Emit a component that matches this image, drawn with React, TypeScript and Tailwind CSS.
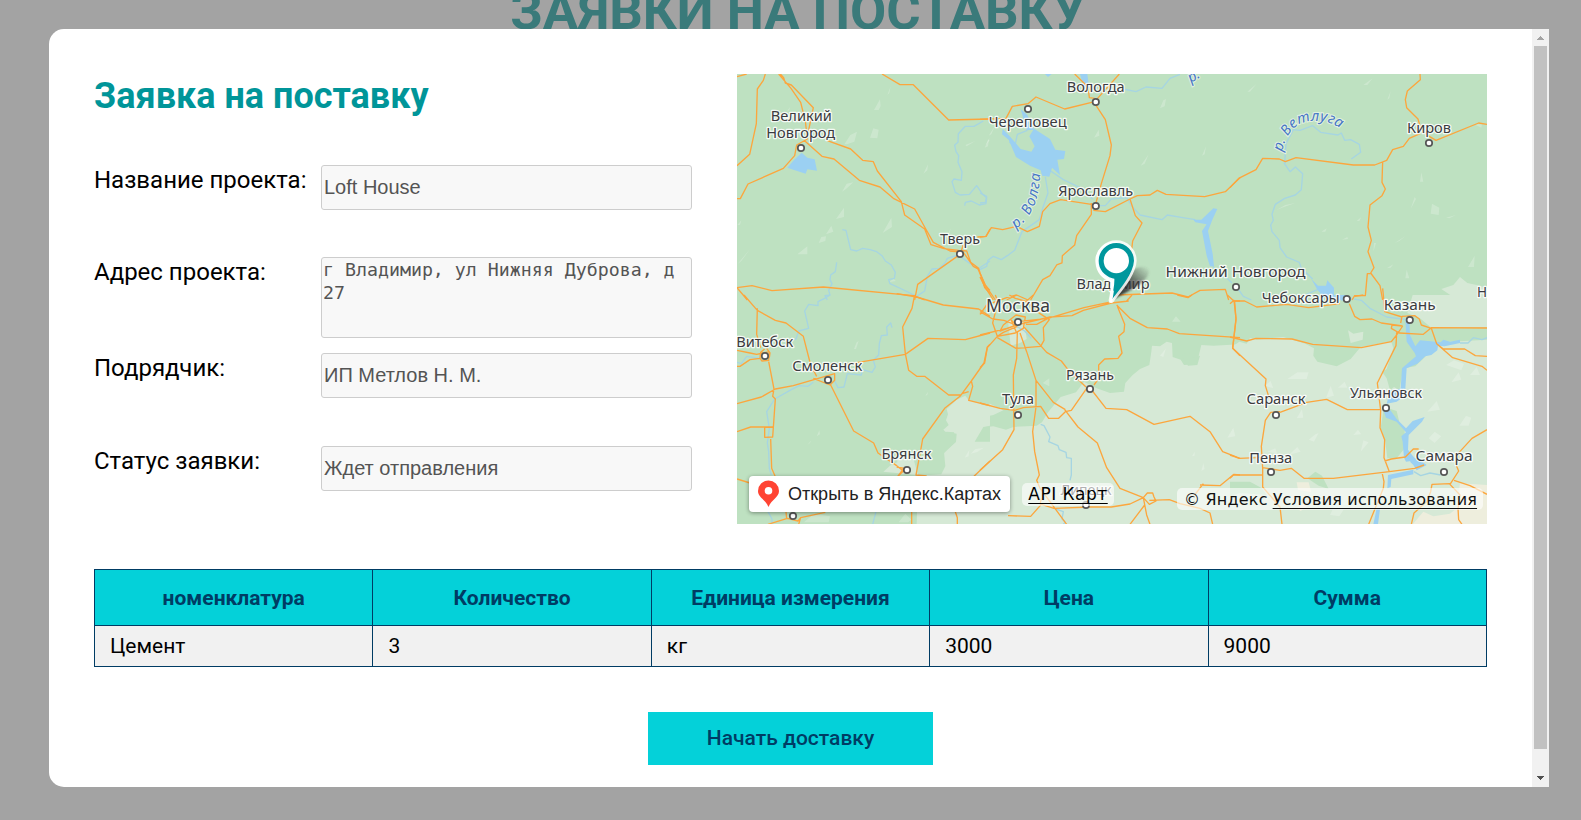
import React from "react";

type Tile = {
  x: number;
  y: number;
  light?: string[];
  forest?: string[];
  sand?: string[];
  shade?: string[];
  water?: string[];
  rivers?: string[];
  roads: string[];
};

/* Map geometry is stored in tiles at three units per pixel. */
const tiles: Tile[] = [
  {
    x: -7,
    y: -9,
    shade: [
      "M343 238l18-28 20-10-8 30-22 8z",
      "M420 218l10-28 16 4-4 26z",
      "M432 135l18-32 2 20-6 12z",
      "M336 380l14-24 20-4-22 20z",
      "M318 462l24-34 0 28z",
      "M458 504l26-46 2 28z",
      "M288 508l16-26 6 18z",
      "M266 534l8-18 14-2-2 14z",
      "M202 568l30-24 0 24z",
      "M580 326l14-28-2 18z",
      "M22 598l40-48-28 38z",
      "M22 480l12-14-4 14z",
      "M170 140l10-14-2 10z",
      "M472 90l10-26-4 20z",
      "M648 520l14-30-6 30z",
      "M706 240l30-12-26 16z",
      "M766 242l8-18 6 0z",
      "M476 652l14-10 8 6z",
    ],
    water: ["M172 308L192 285 215 263 232 278 254 283 261 317 232 313 227 326 190 314Z"],
    rivers: [
      "M760 168L732 184 706 184 685 206 684 232 674 240 678 260 686 272 684 292 696 320 694 346 672 342 666 350 676 382 690 390 718 388 740 362 758 388 770 398 768 416 748 420 724 408 706 412 704 422",
      "M337 494L348 496 362 554 380 558 398 550 420 554 440 560 456 572 466 588 484 600 496 622 493 640 476 644 480 656 515 672 560 694 584 678 592 634 606 612 628 610 645 594 652 580 684 570 712 590 744 612 762 600 780 588",
      "M320 592L316 620 302 630 300 644 306 656 296 676 300 690 285 692 292 705",
    ],
    roads: [
      "M21 35L50 27",
      "M106 27L100 46 82 72 79 176 59 268 21 302",
      "M146 27L183 70 212 112 226 168 232 222 200 240 194 272 160 310 54 357 31 401 21 401",
      "M151 27L161 38 166 54 184 60 250 128 235 200",
      "M222 226L276 274 312 282 388 346 450 366 490 400 554 432 584 486 610 532 660 558 700 562 730 604 744 612 765 660 780 676",
      "M290 226L362 252 398 286 430 290 442 318 514 410 524 450 584 492 603 539 642 551 686 556 710 558 722 592 746 610 764 668 780 686",
      "M456 27L510 59 550 59 656 165 780 162",
      "M700 540L690 568 563 658 554 705",
      "M780 492L768 514 742 516",
      "M21 668L66 662 126 677 280 666 550 692 584 705",
      "M21 668L52 705",
    ],
  },
  {
    x: 243,
    y: -9,
    shade: [
      "M540 130l10-24 8-4-4 22z",
      "M342 218l14-24 2 18z",
      "M482 302l24-34-12 28z",
      "M666 272l12-28-4 24z",
      "M14 248l14-30-4 26z",
      "M26 212l18-28-10 24z",
    ],
    water: [
      "M122 132L142 150 160 190 210 222 226 254 256 258 252 282 232 284 240 330 216 308 208 335 186 332 182 316 150 302 108 276 86 224 66 208 68 192 88 212 122 252 154 260 164 244 148 214 160 194 140 196Z",
      "M300 27L322 27 328 74 310 62Z",
      "M195 27L215 27 204 36Z",
      "M640 464L664 464 700 430 712 432 698 462 684 498 698 566 702 604 690 604 680 572 666 498 680 478 646 472Z",
    ],
    rivers: [
      "M88 230L104 246 112 208 142 196",
      "M430 72L468 80 498 66 546 70 570 40 600 28",
      "M206 314L250 344 300 368 338 402",
      "M196 336L204 384 188 430 178 464 126 500 104 556 82 572 64 584 40 574 24 586 20 604 0 614",
      "M350 422L376 422 394 402 440 398 456 424 480 450 546 464 562 450 608 458 646 464",
      "M0 384L20 394 16 412 0 414",
      "M698 600L712 630 740 638 756 654",
    ],
    roads: [
      "M0 163L78 160 97 124 144 116 168 96 254 132 344 110 418 27",
      "M284 27L324 66 328 98 344 100",
      "M346 118L376 164 394 240 390 272 364 356 346 420",
      "M346 420L334 418 242 404 210 416 188 440 178 484 142 500 110 484 68 494 34 488 18 514 0 516",
      "M334 414L334 448 290 512 284 540 247 572 246 594 230 600 210 632 188 644 152 705",
      "M340 436L376 440 450 402 472 392 510 390 532 376 558 388 674 395 736 380 780 338",
      "M450 402L466 452 486 474 458 528 452 580",
      "M0 624L16 660 46 705",
      "M0 636L14 664 40 705",
      "M390 705L410 690 576 684 624 696 660 676 736 673 746 705",
      "M110 690L80 705M110 690L144 705",
    ],
  },
  {
    x: 493,
    y: -9,
    light: [
      "M634 672L670 660 690 636 712 654 740 660 771 668 771 705 690 705 664 692Z",
    ],
    shade: [
      "M602 446l4-30 22 12-2 22z",
      "M542 432l12-36 4 6z",
      "M138 436l28-16 30-6-40 14z",
      "M494 534l34-22-20 16z",
      "M274 500l16-10-4 10z",
      "M336 524l16-8 2 6z",
      "M570 350l4-28 6 28z",
      "M648 458l30-8-20 10z",
      "M472 104l10-26-4 22z",
      "M400 60l28-20-16 20z",
      "M732 178l24 0-2 10z",
      "M52 80l28-24-20 24z",
      "M526 640l4-26 8 26z",
      "M714 606l20-34-2 34z",
      "M380 468l14-12-6 12z",
      "M470 610l20-12-8 10z",
      "M430 560l2-26 6 0z",
    ],
    water: ["M244 642L264 662 288 662 292 646 312 668 312 690 334 705 284 700 262 674Z"],
    rivers: [
      "M164 296L168 236 190 194 210 196 248 182 272 202 324 210 334 204 344 226 362 224 388 238 392 262 364 282",
      "M162 294L180 320 196 306 218 326 214 374 196 390 164 400 136 418 126 448 130 466 122 480 126 500 148 526 150 548 170 576 208 592 214 610 248 642",
      "M228 689L262 674",
      "M20 666L40 694 64 705",
    ],
    roads: [
      "M0 368L26 340 78 314 98 280 148 282 166 290 198 278 370 300 434 300 470 286 488 254 520 244 538 220 570 206",
      "M570 27L571 44 532 78 526 104 530 128 564 162 572 190 594 212 618 226 746 174 771 178",
      "M458 290L456 352 466 372 456 392 420 420 414 486 424 526 414 560 432 608 422 624 450 662 458 705",
      "M422 626L412 626 406 692 374 692 366 705",
    ],
  },
  {
    x: -7,
    y: 221,
    light: [
      "M780 336L716 316 706 302 690 310 680 314 650 342 654 358 648 376 656 390 640 404 646 410 680 416 678 440 642 470 646 514 634 538 600 540 560 540 460 530 480 512 502 502 500 470 550 490 564 540 560 690 780 690Z",
    ],
    forest: ["M650 410L672 412 678 440 640 476 616 476 632 440Z", "M734 440L780 440 780 392 760 396Z"],
    shade: [
      "M586 302l8-12-2 10z",
      "M232 450l12-14-4 8z",
      "M372 162l8-20 6-4-8 24z",
      "M260 424l8-18 2 12z",
      "M704 488l14-24-2 20z",
      "M222 682l30-26 48 8-4 18z",
      "M506 682l20-26 18 18-10 8z",
      "M722 476l14-14 26-4-22 14z",
    ],
    rivers: [
      "M300 0L284 10 264 20 264 32 236 28 224 48 236 100 206 108 198 132 170 138 164 160",
      "M486 98L482 84 470 96 472 120 454 122 448 146 446 180 430 196 436 216 426 232 398 224 394 240 352 236 342 276 324 278 314 258",
      "M250 262L234 274 208 272 184 284 134 312 110 350 118 400 112 444 116 470 118 520 124 540",
      "M21 202L34 206 50 184 90 190",
      "M114 650L126 672 126 688",
      "M438 650L428 688",
    ],
    roads: [
      "M42 0L82 46 136 76 168 84 220 124 242 210 260 244",
      "M82 40L80 118 92 158",
      "M21 166L60 174 80 178 118 170 116 196 96 198 90 190 60 194 30 214 21 214",
      "M116 200L132 282 128 304 136 312 128 426 104 427 104 397 128 396 62 396 21 410",
      "M21 326L94 306 136 282 190 272 314 236 314 256 300 270 250 250",
      "M104 162L92 172 90 190M110 160L120 174 118 188",
      "M122 432L125 520 136 545M21 552L60 564",
      "M302 270L371 408 431 444 444 474 500 512 520 528 502 546",
      "M350 208L526 178 594 130 706 134 780 114",
      "M554 0L546 40 518 96 526 176 536 226 560 244 584 244 656 300 694 300",
      "M500 -4L560 6 640 30 746 42 780 64",
      "M780 148L772 156 762 204 724 258 690 304 644 340 578 432 572 466 558 540 590 543",
      "M724 258L728 274 716 316 780 332M716 290L696 296",
      "M780 498L732 544M545 650L545 688M676 650L682 668 682 688",
      "M114 688L172 670 204 678 212 668 286 652M206 688L212 668M168 650L170 672",
      "M500 516L524 520M530 536L520 522 502 546",
    ],
  },
  {
    x: 243,
    y: 221,
    light: [
      "M0 398L40 394 78 404 100 396 170 392 186 382 204 352 242 306 288 292 312 260 350 280 390 294 432 290 436 264 458 240 480 222 508 210 514 170 516 152 540 154 560 140 576 144 578 186 602 194 612 210 650 208 664 150 700 152 780 148 780 690 0 690Z",
      "M84 76L134 82 140 132 120 144 92 152Z",
      "M0 338L30 326 70 346 40 360 0 368Z",
    ],
    forest: ["M606 182l18-12 16 18 20-6-8 28-28 2z"],
    shade: [
      "M742 428l18-30 6 26z",
      "M540 182l18-22-8 26z",
      "M636 484l8-14 0 12z",
      "M576 80l26 0-14-16z",
      "M188 264l20-14 0 24z",
      "M664 528l6-24 4 18z",
      "M752 492l22-10-4 8z",
    ],
    rivers: [
      "M182 388L192 392 210 426 206 440 234 452 238 464 258 472 260 488 274 490 274 540 270 556",
      "M222 640L250 650 246 672 256 682 250 688",
      "M110 94L134 108 154 130",
    ],
    roads: [
      "M0 50L38 72 72 76 108 90 210 66 276 62 310 46 394 24 446 18",
      "M112 80L204 70 312 38 386 22M138 88L170 88 208 68",
      "M46 0L54 20 38 84 52 124 106 114 130 100 136 66 108 60 70 90 60 108 110 90 94 76 110 114",
      "M0 120L90 98M0 218L14 204 22 158 52 124 70 112 112 94",
      "M52 128L108 160 182 154 192 136 190 98 208 74 180 56 140 20 106 10 88 0",
      "M0 58L20 30 80 8 110 0M136 22L160 0",
      "M112 112L110 190 100 240 102 404 68 464 0 526",
      "M120 114L140 170 168 256 220 322 256 344",
      "M132 96L200 172 244 198 264 224 318 276",
      "M168 256L168 336 158 410 164 470 178 540 170 556 180 580 210 620 260 688",
      "M336 288L320 280 274 346 256 350 236 370 206 370 182 334 130 338 104 346 60 340 0 324",
      "M254 344L294 396 352 444 380 518 420 580 490 608 502 594 518 594 522 606 528 618 508 628 490 608 450 627 394 636 330 636 222 640 184 628 152 664 84 662",
      "M490 608L500 660 510 688M494 630L450 688M508 616L568 614 600 626 660 640 690 654 698 688",
      "M328 276L378 340 440 344 522 388 630 364 690 410 728 470 780 490",
      "M410 30L450 70 502 98 562 102 598 116 780 128",
      "M412 34L434 88 432 110 416 124 426 174 414 190 374 192 356 210 356 250 342 270",
      "M440 18L456 0M592 0L624 8 636 0",
      "M742 0L764 20 768 74 758 160 780 182M764 18L780 18",
      "M660 570L720 572 762 538 780 540M644 600L670 566",
      "M180 628L184 610",
    ],
  },
  {
    x: 493,
    y: 221,
    light: ["M0 160L28 140 50 146 60 128 80 134 160 126 226 146 252 160 250 182 262 200 320 214 362 192 392 156 458 144 484 140 490 160 470 222 456 230 470 250 480 286 492 276 508 286 520 220 556 214 620 152 660 140 771 134 771 690 0 690Z", "M548 0L771 0 771 96 604 98 570 70 532 54Z", "M354 106l16 10 30-6-2 24-36 10z"],
    forest: [
      "M530 90L600 100 620 145 580 138 556 152 540 128Z",
      "M462 336L500 348 510 390 524 400 524 460 500 490 472 490 466 440 452 398Z",
      "M232 550l24-20 20 12 20 40-30-10z",
      "M0 560l60 0 36 20 14 20-80-6-30 10z",
    ],
    sand: [
      "M690 565L771 570 771 688 548 688 580 650 610 664 660 656 680 640Z",
      "M200 562l36 0 8 30-40-8z",
      "M200 640l20-14 10 10-18 12z",
    ],
    shade: [
      "M172 252l30-20 34 0-6 20z",
      "M104 272l18-14 8 22z",
      "M104 330l20-26 14 20z",
      "M200 370l16-28 4 26z",
      "M236 434l20-16 10-4-14 26z",
      "M392 470l8-34 16 6z",
      "M288 308l14-36 10 30z",
      "M324 278l20-18 8 18z",
      "M176 480l26-24 10 14z",
      "M688 392l20-30 16 6-8 24z",
      "M592 350l28-32 10 26z",
      "M664 262l22-30 8 22z",
      "M648 210l24-14 30 10-8 20z",
      "M440 600l20-12 10 20z",
      "M112 470l24-10 6 16z",
      "M596 430l18-20 20 14-20 20z",
      "M720 240l20-24 10 24z",
      "M300 660l14-30 30 10-16 24z",
      "M370 420l14-16 10 14z",
    ],
    water: [
      "M526 74L538 76 540 120 556 154 570 136 632 142 640 134 660 140 690 134 690 144 644 154 624 152 622 166 604 180 586 184 562 206 530 220 528 250 526 282 512 280 516 220 530 208 558 184 554 174 530 140Z",
      "M458 340L480 344 500 372 528 400 548 378 584 366 576 380 536 420 534 464 546 480 560 496 528 500 522 488 518 440 514 424 528 412 500 380 468 368Z",
      "M470 326L480 286 520 280 520 306 500 320Z",
      "M540 500L560 488 590 510 560 526 550 510Z",
      "M474 540L550 524 550 538 484 552 482 576 472 580Z",
      "M440 640L450 642 444 688 430 688Z",
      "M310 0L350 0 354 4 336 18 318 4Z",
    ],
    rivers: [
      "M552 530L572 542 600 534 632 540",
      "M690 144L714 144 730 128 756 134 771 128",
      "M362 10L394 16 420 40 470 66 530 74",
    ],
    roads: [
      "M0 26L12 16 18 70 8 160 108 252 106 272 118 310",
      "M0 126L50 138 78 130 186 132 248 148 394 158 484 140 500 120 518 93",
      "M10 18L44 18 80 36 170 28 236 38 330 26",
      "M358 26L374 64 390 74 426 72 454 84 518 93",
      "M518 93L486 90 484 100 508 114 580 118 604 98 771 99",
      "M512 84L516 64 554 62 568 72 574 90 604 100 620 146 668 188 756 214 771 226",
      "M458 -20L460 0 464 50 516 66M374 4L400 0",
      "M620 146L640 162 704 162 736 182 771 184",
      "M500 112L498 152 442 264 452 346 450 398 464 434 462 488 478 530",
      "M150 352L230 322 290 313 352 344 452 344",
      "M150 350L122 352 106 376 94 454 98 520 98 576 150 636 156 688",
      "M0 480L28 490 80 488 96 486M0 550L10 540 100 540",
      "M98 518L150 526 184 520 222 550 310 550 478 530 554 520 582 510",
      "M464 498L484 492 526 486 550 462 566 462M456 532L462 560 460 580 416 688",
      "M771 404L726 430 684 476 680 514 686 528 660 568 690 600 684 640 686 674 696 688",
      "M672 556L720 572 771 598M660 566L606 568 602 590 590 620 552 654 544 688",
    ],
  },
];

type City = { t: string; x: number; y: number; w: number; s?: number; dot?: [number, number] };

const cities: City[] = [
  { t: "Великий", x: 64.3, y: 48, w: 61 },
  { t: "Новгород", x: 63.7, y: 65, w: 69, dot: [64, 74] },
  { t: "Тверь", x: 223, y: 171, w: 40, dot: [223, 180] },
  { t: "Вологда", x: 358.7, y: 19, w: 58, dot: [358.8, 28] },
  { t: "Череповец", x: 290.7, y: 53.5, w: 78, dot: [291, 35] },
  { t: "Ярославль", x: 358.7, y: 122.5, w: 75, dot: [358.8, 132] },
  { t: "Владимир", x: 376, y: 216, w: 73 },
  { t: "Нижний Новгород", x: 498.6, y: 203.5, w: 140, dot: [499, 213] },
  { t: "Киров", x: 692, y: 59.5, w: 44, dot: [692, 69] },
  { t: "Чебоксары", x: 563.7, y: 229.5, w: 78, dot: [609.8, 225] },
  { t: "Н", x: 745, y: 223.5, w: 10 },
  { t: "Казань", x: 672.7, y: 237, w: 52, dot: [672.8, 246] },
  { t: "Саранск", x: 539, y: 331, w: 59, dot: [539, 341] },
  { t: "Ульяновск", x: 649, y: 325, w: 72, dot: [649, 334] },
  { t: "Пенза", x: 533.7, y: 389.5, w: 43, dot: [534, 398] },
  { t: "Самара", x: 707, y: 388, w: 57, dot: [707, 398] },
  { t: "Витебск", x: 27.7, y: 274, w: 57, dot: [28, 282] },
  { t: "Смоленск", x: 90.2, y: 297.5, w: 70, dot: [91, 306] },
  { t: "Брянск", x: 169.4, y: 385.5, w: 50, dot: [170, 396] },
  { t: "Москва", x: 281, y: 239, w: 64, s: 17.5, dot: [281, 248] },
  { t: "Рязань", x: 353, y: 307, w: 48, dot: [353, 315] },
  { t: "Тула", x: 281, y: 331, w: 32, dot: [281, 341] },
  { t: "Липецк", x: 349, y: 421.5, w: 51, dot: [349, 431] },
  { t: "", x: 0, y: 0, w: 0, dot: [56, 442] },
];

function MapCanvas() {
  const layer = (key: keyof Tile, props: React.SVGProps<SVGPathElement>) =>
    tiles.map((t, i) => (
      <g key={i} transform={`translate(${t.x} ${t.y}) scale(.33333)`}>
        <path d={((t[key] as string[] | undefined) ?? []).join("")} {...props} />
      </g>
    ));
  return (
    <svg width="750" height="450" viewBox="0 0 750 450" className="block">
      <defs>
        <linearGradient id="pinShadow" x1="0" y1="1" x2="1" y2="0">
          <stop offset="0" stopColor="#222" stopOpacity="1" />
          <stop offset="0.55" stopColor="#333" stopOpacity="0.7" />
          <stop offset="1" stopColor="#555" stopOpacity="0" />
        </linearGradient>
        <filter id="soft">
          <feGaussianBlur stdDeviation="3" />
        </filter>
        <path id="volga" d="M279 155C294 144 303 126 303 97" />
        <path id="vetluga" d="M545 78C549 60 558 48 574 47S596 49 614 61" />
      </defs>
      <rect width="750" height="450" fill="#bee1c1" />
      {layer("light", { fill: "#d6e9d6" })}
      {layer("forest", { fill: "#bee1c1" })}
      {layer("sand", { fill: "#eeeedd" })}
      {layer("shade", { fill: "#fff", fillOpacity: 0.22 })}
      {layer("rivers", { fill: "none", stroke: "#a6d5e2", strokeWidth: 4, strokeLinejoin: "round" })}
      {layer("water", { fill: "#9bd0f2" })}
      {layer("roads", { fill: "none", stroke: "#fca63d", strokeWidth: 4, strokeLinejoin: "round" })}
      {cities.map(
        (c, i) =>
          c.dot && <circle key={i} cx={c.dot[0]} cy={c.dot[1]} r="3.2" fill="#fff" stroke="#575757" strokeWidth="1.7" />,
      )}
      <g
        className="font-['Noto_Sans']"
        textAnchor="middle"
        fill="#3b3b40"
        stroke="#fff"
        strokeOpacity="0.85"
        strokeWidth="2.6"
        strokeLinejoin="round"
        paintOrder="stroke"
      >
        {cities.map((c) =>
          c.t ? (
            <text key={c.t} x={c.x} y={c.y - 0.8} fontSize={c.s ?? 15} textLength={c.w} lengthAdjust="spacingAndGlyphs">
              {c.t}
            </text>
          ) : null,
        )}
      </g>
      <g
        className="font-['Noto_Sans'] italic"
        fontSize="14.5"
        fill="#4676c5"
        stroke="#e2f1e2"
        strokeWidth="2"
        paintOrder="stroke"
      >
        <text textLength="63">
          <textPath href="#volga">р. Волга</textPath>
        </text>
        <text textLength="77">
          <textPath href="#vetluga">р. Ветлуга</textPath>
        </text>
        <text transform="translate(454 9) rotate(-32)">р.</text>
      </g>
      <g transform="translate(343 156) scale(.33333)">
        <path d="M98 208L130 150C150 112 194 102 206 120 214 146 158 180 98 208Z" fill="url(#pinShadow)" filter="url(#soft)" />
        <path
          d="M109 39A53 53 0 0 0 50 98C52 126 68 144 96 154L93 210 101 200 109 39Z"
          fill="#d2e9ff"
          stroke="#ffffff"
          strokeWidth="7"
        />
        <path
          d="M109 39A53 53 0 0 0 56 92C56 118 72 136 97 145L103 146C104 165 99 185 94 211C125 170 160 130 162 92A53 53 0 0 0 109 39Z"
          fill="#00979d"
          stroke="#fff"
          strokeOpacity="0.85"
          strokeWidth="16"
          strokeLinejoin="round"
          paintOrder="stroke"
        />
        <circle cx="109" cy="92" r="38" fill="#fff" />
        <path d="M93 214L98 184" stroke="#fff" strokeWidth="7" strokeLinecap="round" />
      </g>
    </svg>
  );
}

const fieldBox =
  "box-border w-[371px] resize-none rounded-[3px] border border-[#cdcdcd] bg-[#f8f8f8] text-[#545454] outline-none";

function Field({ label, children, className }: { label: string; children: React.ReactNode; className: string }) {
  return (
    <div className={`flex items-start ${className}`}>
      <div className="w-[227px] whitespace-nowrap pt-px text-[24px] leading-[28px] text-black">{label}</div>
      {children}
    </div>
  );
}

const columns = ["номенклатура", "Количество", "Единица измерения", "Цена", "Сумма"];
const row = ["Цемент", "3", "кг", "3000", "9000"];

export default function App() {
  return (
    <div className="relative h-[820px] w-[1581px] overflow-hidden bg-[#a3a3a3] font-[Roboto,sans-serif]">
      <h1 className="-mt-[25px] pl-[15px] text-center text-[52.6px] leading-[72px] font-bold text-[#3a7a7a]">ЗАЯВКИ НА ПОСТАВКУ</h1>

      <div className="absolute top-[29px] left-[49px] flex h-[758px] w-[1500px] overflow-hidden rounded-l-[15px] bg-white">
        <div className="w-[1483px] px-[45px] pt-[45px]">
          <div className="flex h-[450px] justify-between">
            <div className="w-[598px]">
              <h2 className="text-[36px] leading-[44px] font-bold text-[#009599]">Заявка на поставку</h2>
              <Field label="Название проекта:" className="mt-[47px] h-[92px]">
                <input readOnly value="Loft House" className={`${fieldBox} h-[45px] px-[2px] font-['Liberation_Sans'] text-[20px]`} />
              </Field>
              <Field label="Адрес проекта:" className="h-[96px]">
                <textarea
                  readOnly
                  value="г Владимир, ул Нижняя Дуброва, д 27"
                  className={`${fieldBox} h-[81px] overflow-hidden px-px pt-0 font-['DejaVu_Sans_Mono'] text-[18.25px] leading-[23px]`}
                />
              </Field>
              <Field label="Подрядчик:" className="h-[93px]">
                <input readOnly value="ИП Метлов Н. М." className={`${fieldBox} h-[45px] px-[2px] font-['Liberation_Sans'] text-[20px]`} />
              </Field>
              <Field label="Статус заявки:" className="h-[45px]">
                <input readOnly value="Ждет отправления" className={`${fieldBox} h-[45px] px-[2px] font-['Liberation_Sans'] text-[20px]`} />
              </Field>
            </div>

            <div className="relative h-[450px] w-[750px] overflow-hidden">
              <MapCanvas />
              <div className="absolute top-[402px] left-[12px] flex h-[36px] w-[261px] items-center rounded-[4px] bg-white pl-[8px] shadow-[0_1px_4px_rgba(0,0,0,0.4)]">
                <svg width="23" height="28" viewBox="0 0 23 28" className="shrink-0">
                  <path
                    d="M11.5 0.500A10.500 10.500 0 0 0 1 11C1 17.500 8.200 19 11.500 27 14.800 19 22 17.500 22 11A10.500 10.500 0 0 0 11.500 0.500Z"
                    fill="#ff4433"
                  />
                  <circle cx="11.5" cy="10.8" r="3.8" fill="#fff" />
                </svg>
                <span className="ml-[8px] whitespace-nowrap font-['Liberation_Sans'] text-[18px] text-[#222]">Открыть в Яндекс.Картах</span>
              </div>
              <div className="absolute top-[409px] left-[285px] flex h-[23px] w-[92px] items-center justify-center rounded-[5px] bg-white/60 pt-px font-['DejaVu_Sans'] text-[17px] tracking-[0.5px] whitespace-nowrap text-black">
                <span className="underline underline-offset-[3px]">API Карт</span>
              </div>
              <div className="absolute top-[414px] left-[440px] flex h-[22px] w-[306px] items-center gap-[5px] rounded-[5px] bg-white/60 pt-[2px] pl-[7px] font-['DejaVu_Sans'] text-[16px] tracking-[0.2px] whitespace-nowrap text-[#111]">
                <span>© Яндекс</span>
                <span className="underline underline-offset-[3px]">Условия использования</span>
              </div>
            </div>
          </div>

          <table className="mt-[45px] w-[1393px] table-fixed border-collapse">
            <thead>
              <tr className="h-[56px] bg-[#04d1d9]">
                {columns.map((c) => (
                  <th key={c} className="border border-[#003c64] pt-[2px] text-[21px] font-bold text-[#003c64]">
                    {c}
                  </th>
                ))}
              </tr>
            </thead>
            <tbody>
              <tr className="h-[41px] bg-[#f1f1f1]">
                {row.map((c) => (
                  <td key={c} className="border border-[#003c64] pl-[15px] text-[21px] leading-[24px] text-black">
                    {c}
                  </td>
                ))}
              </tr>
            </tbody>
          </table>

          <div className="mt-[45px] flex justify-center">
            <button className="h-[53px] w-[285px] bg-[#04d1d9] text-[21px] font-medium text-[#003c64]">Начать доставку</button>
          </div>
        </div>

        <div className="flex w-[17px] flex-col items-center bg-[#f1f1f1]">
          <svg width="17" height="17" viewBox="0 0 17 17" shapeRendering="crispEdges">
            <path d="M5 10h7v1H5zM6 9h5v1H6zM7 8h3v1H7zM8 7h1v1H8z" fill="#a3a3a3" />
          </svg>
          <div className="h-[703px] w-[13px] bg-[#c1c1c1]" />
          <div className="flex-1" />
          <svg width="17" height="17" viewBox="0 0 17 17" shapeRendering="crispEdges">
            <path d="M5 6h7v1H5zM6 7h5v1H6zM7 8h3v1H7zM8 9h1v1H8z" fill="#505050" />
          </svg>
        </div>
      </div>
    </div>
  );
}
